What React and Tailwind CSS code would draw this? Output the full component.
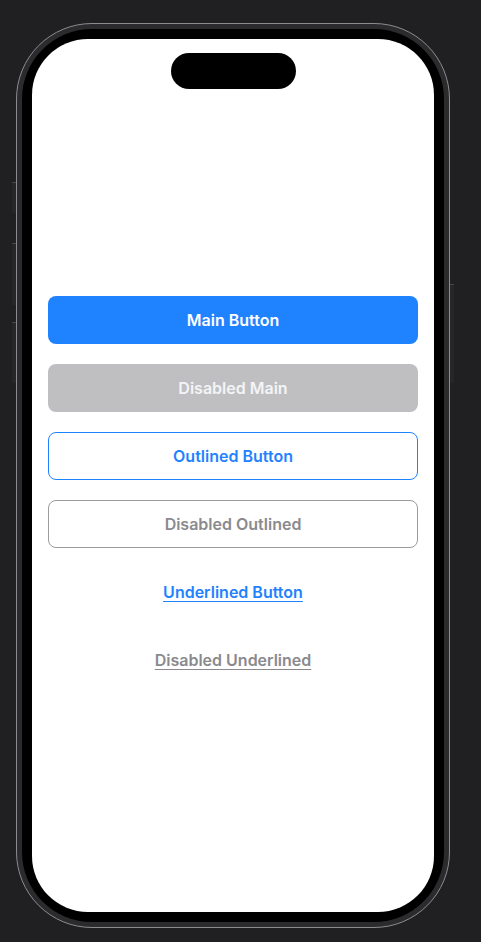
export default function App() {
  const font = { fontFamily: "Inter, 'Noto Sans', sans-serif" };
  return (
    <div className="w-[481px] h-[942px] bg-[#202022] overflow-hidden pt-[23px] pl-[16px]" style={font}>
      <div className="relative w-[434px] h-[905px]">
        {/* side buttons */}
        <div className="absolute left-[-4px] top-[159px] w-[4px] h-[31px] bg-[#262628] border-t border-[#4a4a4c] rounded-l-[1px]" />
        <div className="absolute left-[-4px] top-[220px] w-[4px] h-[62px] bg-[#262628] border-t border-[#4a4a4c] rounded-l-[1px]" />
        <div className="absolute left-[-4px] top-[299px] w-[4px] h-[61px] bg-[#262628] border-t border-[#4a4a4c] rounded-l-[1px]" />
        <div className="absolute right-[-4px] top-[261px] w-[4px] h-[99px] bg-[#262628] border-t border-[#4a4a4c] rounded-r-[1px]" />
        <div className="w-full h-full rounded-[76px] bg-[#2b2b2d] border border-[#8c8c8e] p-[5px]">
          <div className="w-full h-full rounded-[70px] bg-black p-[10px]">
            <div className="w-full h-full rounded-[56px] bg-white flex flex-col items-center pt-[14px]">
              <div className="w-[125px] h-[36px] rounded-full bg-black" />
              <div className="w-full px-[16px] mt-[207px] flex flex-col gap-[20px]">
                <button className="h-[48px] w-full rounded-[8px] bg-[#1f82ff] text-white text-[16px] font-semibold">
                  Main Button
                </button>
                <button className="h-[48px] w-full rounded-[8px] bg-[#bfbfc1] text-[#f4f4f6] text-[16px] font-semibold">
                  Disabled Main
                </button>
                <button className="h-[48px] w-full rounded-[8px] border border-[#1f82ff] text-[#1f82ff] text-[16px] font-semibold">
                  Outlined Button
                </button>
                <button className="h-[48px] w-full rounded-[8px] border border-[#9c9ca0] text-[#8a8a8e] text-[16px] font-semibold">
                  Disabled Outlined
                </button>
                <button className="h-[48px] w-full text-[#1f82ff] text-[16px] font-semibold underline underline-offset-[3px]">
                  Underlined Button
                </button>
                <button className="h-[48px] w-full text-[#8a8a8e] text-[16px] font-semibold underline underline-offset-[3px]">
                  Disabled Underlined
                </button>
              </div>
            </div>
          </div>
        </div>
      </div>
    </div>
  );
}
